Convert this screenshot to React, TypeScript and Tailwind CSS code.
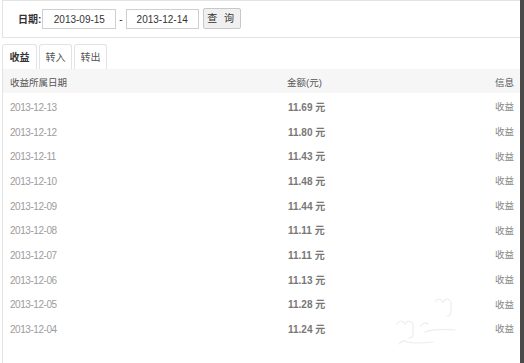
import React from 'react';

const rows = [
  { date: '2013-12-13', amount: '11.69' },
  { date: '2013-12-12', amount: '11.80' },
  { date: '2013-12-11', amount: '11.43' },
  { date: '2013-12-10', amount: '11.48' },
  { date: '2013-12-09', amount: '11.44' },
  { date: '2013-12-08', amount: '11.11' },
  { date: '2013-12-07', amount: '11.11' },
  { date: '2013-12-06', amount: '11.13' },
  { date: '2013-12-05', amount: '11.28' },
  { date: '2013-12-04', amount: '11.24' },
];

const font = { fontFamily: '"Liberation Sans", "Noto Sans CJK SC", sans-serif' };

function Watermark() {
  return (
    <svg className="absolute left-[395px] top-[292px]" width="90" height="60" viewBox="0 0 90 60" fill="none">
      <g stroke="#ededed" strokeWidth="1.2" strokeLinecap="round">
        <path d="M40 10 q4 -6 8 0 q4 -6 8 0 v10 q0 4 -4 4" />
        <path d="M2 32 q4 -6 8 0 q4 -6 8 0 v10 q0 4 -4 4" />
        <path d="M26 34 q3 -5 7 -2" />
        <path d="M30 40 q10 -4 30 -2" />
        <path d="M4 52 q4 -5 8 -2 q10 2 26 0" />
      </g>
    </svg>
  );
}

export default function App() {
  return (
    <div className="flex w-[524px] h-[363px] bg-white overflow-hidden" style={font}>
      <div className="relative w-[520px] pl-[2px]">
        <div className="flex items-center h-[38px] border border-r-0 border-[#e3e3e3] pl-[15px]">
          <span className="text-[10px] text-[#333] font-bold mr-[1px]">日期:</span>
          <div className="flex items-center justify-center w-[74px] h-[20px] border border-[#cfcfcf] text-[10px] text-[#333]">
            2013-09-15
          </div>
          <span className="text-[10px] text-[#333] mx-[3px]">-</span>
          <div className="flex items-center justify-center w-[73px] h-[20px] border border-[#cfcfcf] text-[10px] text-[#333]">
            2013-12-14
          </div>
          <button className="ml-[4px] w-[38px] h-[21px] -mt-[1px] border border-[#c8c8c8] bg-[#f0f0f0] rounded-[2px] text-[10px] text-[#333] tracking-[2px]">
            查 询
          </button>
        </div>

        <div className="flex mt-[6px] gap-[2px] h-[25px]">
          <div className="w-[35px] flex items-center justify-center border border-b-0 border-[#e3e3e3] rounded-t-[3px] bg-white text-[10px] font-bold text-[#333]">
            收益
          </div>
          <div className="w-[33px] flex items-center justify-center border border-b-0 border-[#e3e3e3] rounded-t-[3px] text-[10px] text-[#555]">
            转入
          </div>
          <div className="w-[33px] flex items-center justify-center border border-b-0 border-[#e3e3e3] rounded-t-[3px] text-[10px] text-[#555]">
            转出
          </div>
        </div>

        <div className="border-l border-[#e3e3e3] h-full">
          <div className="flex items-center h-[24px] pt-[4px] bg-[#f6f6f6] text-[9.5px] text-[#555] pl-[7px] pr-[6px]">
            <span className="w-[277px]">收益所属日期</span>
            <span className="flex-1">金额(元)</span>
            <span>信息</span>
          </div>
          {rows.map((r, i) => (
            <div key={i} className="flex items-center h-[24.7px] pt-[4px] pl-[7px] pr-[6px]">
              <span className="w-[278px] text-[10px] text-[#9c9c9c] tracking-[-0.45px]">{r.date}</span>
              <span className="flex-1 text-[10px] font-bold text-[#777]">
                {r.amount} <span className="text-[10px]">元</span>
              </span>
              <span className="text-[9.5px] text-[#888]">收益</span>
            </div>
          ))}
        </div>
        <Watermark />
      </div>
      <div className="w-[4px] bg-[#4a4a4a]" />
    </div>
  );
}
